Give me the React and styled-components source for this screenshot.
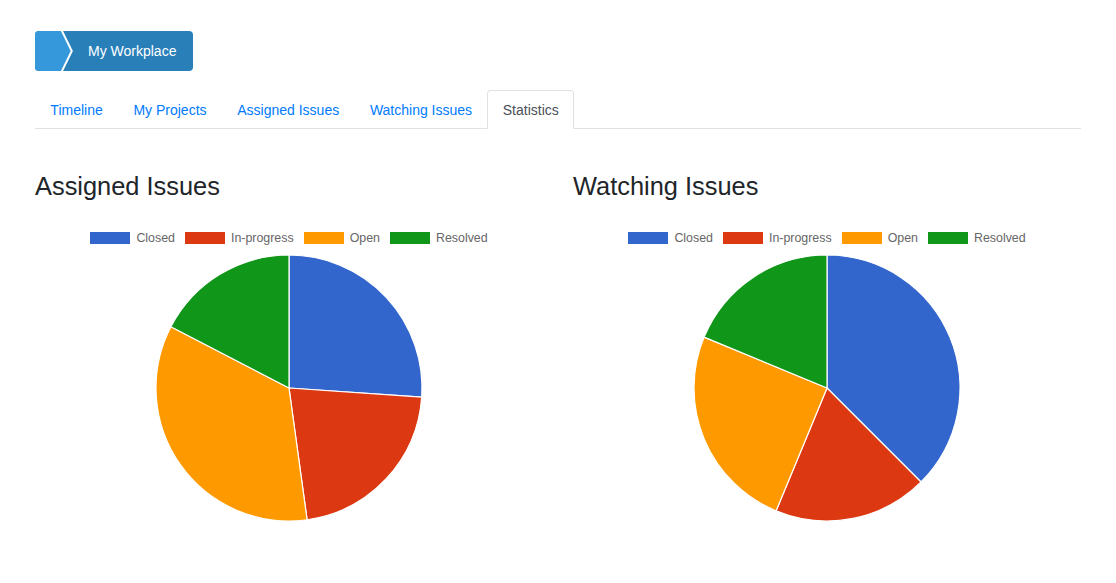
import React from "react";
import styled, { createGlobalStyle } from "styled-components";

const GlobalStyle = createGlobalStyle`
  html, body {
    margin: 0;
    padding: 0;
    background: #fff;
  }
  body {
    font-family: "Liberation Sans", Arial, sans-serif;
    color: #212529;
  }
`;

const COLORS = {
  closed: "#3366cc",
  inProgress: "#dc3912",
  open: "#ff9900",
  resolved: "#109618",
};

const LEGEND = [
  { key: "closed", label: "Closed" },
  { key: "inProgress", label: "In-progress" },
  { key: "open", label: "Open" },
  { key: "resolved", label: "Resolved" },
];

const charts = [
  {
    title: "Assigned Issues",
    data: { closed: 6, inProgress: 5, open: 8, resolved: 4 },
  },
  {
    title: "Watching Issues",
    data: { closed: 6, inProgress: 3, open: 4, resolved: 3 },
  },
];

const Page = styled.div`
  padding: 31px 35px 0;
`;

const Breadcrumb = styled.nav`
  display: flex;
  width: fit-content;
  height: 40px;
  border-radius: 4px;
  overflow: hidden;
  background: #2980b9;
`;

const HomeCrumb = styled.div`
  width: 26px;
  background: #3498db;
`;

const CrumbArrow = styled.svg`
  display: block;
  width: 14px;
  height: 40px;
`;

const CrumbLabel = styled.span`
  padding: 0 17px 0 13px;
  font-size: 14px;
  line-height: 40px;
  color: #fff;
`;

const Tabs = styled.ul`
  display: flex;
  list-style: none;
  margin: 19px 0 0;
  padding: 0;
  border-bottom: 1px solid #dee2e6;
`;

const Tab = styled.li`
  margin-bottom: -1px;
  padding: 9px 14.35px 7px;
  font-size: 14px;
  line-height: 21px;
  border: 1px solid ${({ $active }) => ($active ? "#dee2e6" : "transparent")};
  border-bottom-color: ${({ $active }) => ($active ? "#fff" : "transparent")};
  border-radius: 4px 4px 0 0;
  background: ${({ $active }) => ($active ? "#fff" : "transparent")};
  color: ${({ $active }) => ($active ? "#495057" : "#007bff")};
  cursor: pointer;
`;

const Row = styled.div`
  display: grid;
  grid-template-columns: 1fr 1fr;
  column-gap: 30px;
  margin-top: 42px;
`;

const Column = styled.section`
  display: flex;
  flex-direction: column;
`;

const Heading = styled.h3`
  margin: 0;
  font-size: 25.4px;
  font-weight: 400;
  line-height: 30px;
  color: #212529;
`;

const Legend = styled.div`
  display: flex;
  justify-content: center;
  align-items: center;
  gap: 10px;
  margin-top: 31px;
  height: 12px;
`;

const LegendItem = styled.div`
  display: flex;
  align-items: center;
  gap: 6px;
  font-size: 12.4px;
  line-height: 12px;
  color: #666;
`;

const Swatch = styled.span`
  display: block;
  width: 40px;
  height: 12px;
  background: ${({ $color }) => $color};
`;

const PieSvg = styled.svg`
  display: block;
  margin: 0 auto;
`;

function slicePath(cx, cy, r, a0, a1) {
  const p = (a) => [cx + r * Math.sin(a), cy - r * Math.cos(a)];
  const [x0, y0] = p(a0);
  const [x1, y1] = p(a1);
  const large = a1 - a0 > Math.PI ? 1 : 0;
  return `M${cx},${cy} L${x0},${y0} A${r},${r} 0 ${large} 1 ${x1},${y1} Z`;
}

function Pie({ data }) {
  const total = LEGEND.reduce((s, l) => s + data[l.key], 0);
  const cx = 140;
  const cy = 144;
  const r = 133;
  let angle = 0;
  return (
    <PieSvg width="280" height="290" viewBox="0 0 280 290">
      {LEGEND.map((l) => {
        const a0 = angle;
        const a1 = angle + (data[l.key] / total) * Math.PI * 2;
        angle = a1;
        return (
          <path
            key={l.key}
            d={slicePath(cx, cy, r, a0, a1)}
            fill={COLORS[l.key]}
            stroke="#fff"
            strokeWidth="1.2"
            strokeLinejoin="round"
          />
        );
      })}
    </PieSvg>
  );
}

function ChartPanel({ title, data }) {
  return (
    <Column>
      <Heading>{title}</Heading>
      <Legend>
        {LEGEND.map((l) => (
          <LegendItem key={l.key}>
            <Swatch $color={COLORS[l.key]} />
            {l.label}
          </LegendItem>
        ))}
      </Legend>
      <Pie data={data} />
    </Column>
  );
}

const TABS = ["Timeline", "My Projects", "Assigned Issues", "Watching Issues", "Statistics"];

export default function App() {
  return (
    <Page>
      <GlobalStyle />
      <Breadcrumb>
        <HomeCrumb />
        <CrumbArrow viewBox="0 0 14 40">
          <polygon points="0,-1 10,20 0,41" fill="#3498db" />
          <polyline points="0.5,-1 10.8,20 0.5,41" fill="none" stroke="#fff" strokeWidth="2" />
        </CrumbArrow>
        <CrumbLabel>My Workplace</CrumbLabel>
      </Breadcrumb>
      <Tabs>
        {TABS.map((t) => (
          <Tab key={t} $active={t === "Statistics"}>
            {t}
          </Tab>
        ))}
      </Tabs>
      <Row>
        {charts.map((c) => (
          <ChartPanel key={c.title} title={c.title} data={c.data} />
        ))}
      </Row>
    </Page>
  );
}
